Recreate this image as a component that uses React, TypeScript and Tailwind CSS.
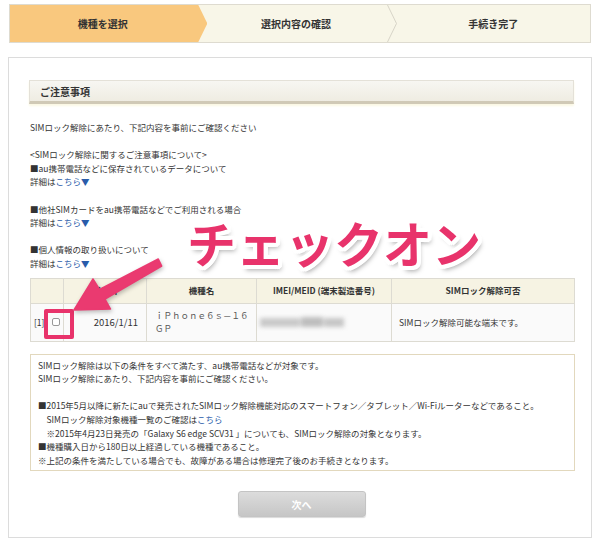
import React from "react";

const font = "font-['Noto_Sans_CJK_JP','Noto_Sans',sans-serif]";

function Chevron({ color }: { color: string }) {
  return (
    <svg className="absolute right-0 top-0 h-full w-[10px]" viewBox="0 0 10 39" preserveAspectRatio="none">
      <polyline points="0.5,0 9.5,19.5 0.5,39" fill="none" stroke={color} strokeWidth="1" />
    </svg>
  );
}

function Link({ children }: { children: React.ReactNode }) {
  return <span className="text-[#2a5caa]">{children}</span>;
}

export default function App() {
  return (
    <div className={`relative w-[600px] h-[544px] bg-white text-[#333] ${font} overflow-hidden`}>
      {/* Step bar */}
      <div className="pt-[4px] px-[9px]">
        <div className="relative flex h-[39px] border border-[#dedbd0] bg-[#f8f6e8]">
          <div className="relative flex-1 flex items-center justify-center">
            <div className="absolute inset-0 -right-[4px] bg-[#f9c87e] [clip-path:polygon(0_0,calc(100%-9px)_0,100%_50%,calc(100%-9px)_100%,0_100%)]" />
            <span className="relative text-[10px] font-bold pr-[8px]">機種を選択</span>
          </div>
          <div className="relative flex-1 flex items-center justify-center">
            <span className="relative text-[10px] font-bold pr-[8px]">選択内容の確認</span>
            <Chevron color="#d6d3c6" />
          </div>
          <div className="relative flex-1 flex items-center justify-center">
            <span className="relative text-[10px] font-bold">手続き完了</span>
          </div>
        </div>
      </div>

      {/* Main panel */}
      <div className="mx-[8px] mt-[14px] h-[481px] border border-[#dcdcdc] pt-[22px] pl-[20px] pr-[17px]">
        <div className="h-[24px] flex items-center pl-[10px] border border-[#e4e1d8] border-b-[3px] border-b-[#d0c9b6] bg-gradient-to-b from-[#f7f6f2] to-[#efece2] shadow-[0_2px_2px_#fbf8e4]">
          <span className="text-[10px] font-bold">ご注意事項</span>
        </div>

        <div className="mt-[17px] pl-[1px] text-[8.5px] leading-[13.6px]">
          <p>SIMロック解除にあたり、下記内容を事前にご確認ください</p>
          <p className="h-[13.6px]" />
          <p>&lt;SIMロック解除に関するご注意事項について&gt;</p>
          <p>■au携帯電話などに保存されているデータについて</p>
          <p>詳細は<Link>こちら▼</Link></p>
          <p className="h-[13.6px]" />
          <p>■他社SIMカードをau携帯電話などでご利用される場合</p>
          <p>詳細は<Link>こちら▼</Link></p>
          <p className="h-[13.6px]" />
          <p>■個人情報の取り扱いについて</p>
          <p>詳細は<Link>こちら▼</Link></p>
        </div>

        <table className="mt-[7px] ml-[1px] w-[544px] border-collapse text-[8.5px] table-fixed">
          <colgroup>
            <col className="w-[33px]" />
            <col className="w-[83px]" />
            <col className="w-[110px]" />
            <col className="w-[135px]" />
            <col className="w-[183px]" />
          </colgroup>
          <thead>
            <tr className="h-[25px] bg-[#f6f3e3]">
              <th className="border border-[#dddbd2]"></th>
              <th className="border border-[#dddbd2] font-bold">購入日</th>
              <th className="border border-[#dddbd2] font-bold">機種名</th>
              <th className="border border-[#dddbd2] font-bold">IMEI/MEID (端末製造番号)</th>
              <th className="border border-[#dddbd2] font-bold">SIMロック解除可否</th>
            </tr>
          </thead>
          <tbody>
            <tr className="h-[38px] bg-[#fafafa]">
              <td className="border border-[#dddbd2] pl-[3px]">
                <div className="flex items-center gap-[8px]">
                  <span>[1]</span>
                  <span className="inline-block w-[8px] h-[8px] border border-[#999] rounded-[2px] bg-white" />
                </div>
              </td>
              <td className="border border-[#dddbd2] text-right pr-[8px] text-[9.5px]">2016/1/11</td>
              <td className="border border-[#dddbd2] pl-[8px] pr-[6px] text-[8.5px] leading-[13px] text-[#555]">ｉＰｈｏｎｅ６ｓ－１６ＧＰ</td>
              <td className="border border-[#dddbd2] pl-[3px]">
                <div className="flex items-center gap-[1px] blur-[2px]">
                  <span className="inline-block w-[40px] h-[9px] bg-[#c9c9c9]" />
                  <span className="inline-block w-[22px] h-[10px] bg-[#bdbdbd]" />
                  <span className="inline-block w-[20px] h-[9px] bg-[#c6c6c6]" />
                </div>
              </td>
              <td className="border border-[#dddbd2] pl-[7px]">SIMロック解除可能な端末です。</td>
            </tr>
          </tbody>
        </table>

        <div className="mt-[12px] ml-[1px] w-[545px] border border-[#e2d8bd] pt-[4px] pb-[3px] pl-[7px] text-[8.5px] leading-[13.6px]">
          <p>SIMロック解除は以下の条件をすべて満たす、au携帯電話などが対象です。</p>
          <p>SIMロック解除にあたり、下記内容を事前にご確認ください。</p>
          <p className="h-[13.6px]" />
          <p>■2015年5月以降に新たにauで発売されたSIMロック解除機能対応のスマートフォン／タブレット／Wi-Fiルーターなどであること。</p>
          <p className="pl-[8.5px]">SIMロック解除対象機種一覧のご確認は<Link>こちら</Link></p>
          <p className="pl-[8.5px]">※2015年4月23日発売の「Galaxy S6 edge SCV31 」についても、SIMロック解除の対象となります。</p>
          <p>■機種購入日から180日以上経過している機種であること。</p>
          <p>※上記の条件を満たしている場合でも、故障がある場合は修理完了後のお手続きとなります。</p>
        </div>

        <div className="mt-[20px] flex justify-center">
          <button className="w-[128px] h-[26px] rounded-[3px] bg-gradient-to-b from-[#dcdcdc] to-[#c6c6c6] border border-[#c4c4c4] shadow-[0_1px_1px_rgba(0,0,0,0.15)] text-white text-[10px] font-bold">
            次へ
          </button>
        </div>
      </div>

      {/* Annotation overlay */}
      <div className="absolute left-[44px] top-[309px] w-[30px] h-[30px] border-[4px] border-[#e8336b] rounded-[2px]" />
      <svg className="absolute left-0 top-0 w-[600px] h-[544px] pointer-events-none [filter:drop-shadow(1px_2px_2px_rgba(0,0,0,0.25))]" viewBox="0 0 600 544">
        <polygon
          points="74,310 110.5,309 105,299 161.7,266 158.3,259 99.5,289.5 93,279"
          fill="#ea3a70"
          stroke="#ea3a70"
          strokeWidth="1.5"
          strokeLinejoin="round"
        />
      </svg>
      <div className="absolute left-[187px] top-[222px] text-[49px] leading-[40px] font-bold text-[#e8336b] whitespace-nowrap [text-shadow:4px_0_0_#fff,-4px_0_0_#fff,0_4px_0_#fff,0_-4px_0_#fff,3px_3px_0_#fff,-3px_3px_0_#fff,3px_-3px_0_#fff,-3px_-3px_0_#fff,2px_4px_0_#fff,-2px_4px_0_#fff,2px_-4px_0_#fff,-2px_-4px_0_#fff,4px_2px_0_#fff,-4px_2px_0_#fff,4px_-2px_0_#fff,-4px_-2px_0_#fff,3px_5px_5px_rgba(0,0,0,0.35)]">
        チェックオン
      </div>
    </div>
  );
}
